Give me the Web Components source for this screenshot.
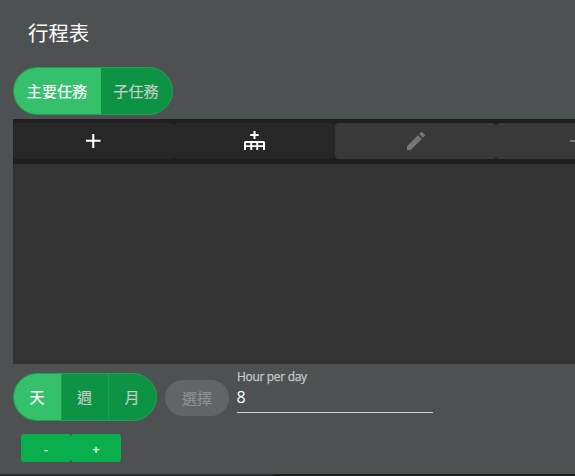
<!DOCTYPE html>
<html lang="zh-Hant">
<head>
<meta charset="utf-8">
<title>行程表</title>
<style>
html,body{margin:0;height:100%;overflow:hidden;background:#4d5151}
body{font-family:"Open Sans","Noto Sans CJK TC",sans-serif;color:#fff}
</style>
</head>
<body>
<schedule-page></schedule-page>
<script>
const define = (name, html) => customElements.define(name, class extends HTMLElement {
  constructor() {
    super();
    const t = document.createElement('template');
    t.innerHTML = html;
    this.attachShadow({mode: 'open'}).append(t.content.cloneNode(true));
  }
});

define('pill-group', `<style>
:host{display:flex;width:max-content;height:48px;box-sizing:border-box;border:1px solid #24a054;border-radius:24px;overflow:hidden;background:#0d9344}
</style><slot></slot>`);

define('pill-option', `<style>
:host{display:flex;box-sizing:border-box;align-items:center;justify-content:center;width:var(--w,48px);font-size:15px;line-height:20px;color:#c3cec6;font-weight:400;letter-spacing:.1px;border-left:1px solid #24a054}
:host(:first-child){border-left:0}
:host([plain]){border-left:0}
:host([selected]){background:#35c16c;color:#fff}
span{padding:0 1px 1px 0;-webkit-text-stroke:.2px currentColor}
</style><span><slot></slot></span>`);

define('tool-button', `<style>
:host{display:flex;flex:0 0 161px;height:36px;border-radius:4px;background:#272727;color:#fff;align-items:center;justify-content:center}
:host([disabled]){background:#393939;color:#767676}
</style><slot></slot>`);

define('tool-bar', `<style>
:host{display:flex;box-sizing:border-box;height:45px;padding-top:4px;background:#1f1f1f;overflow:hidden}
</style><slot></slot>`);

define('select-button', `<style>
:host{display:flex;box-sizing:border-box;width:64px;height:36px;padding-bottom:1px;border-radius:18px;background:#626566;color:#8d9090;align-items:center;justify-content:center;font-size:15px;font-weight:400;-webkit-text-stroke:.2px currentColor}
</style><slot></slot>`);

define('number-field', `<style>
:host{display:block;box-sizing:border-box;width:196px;height:44px;border-bottom:1px solid #d3d4d4}
label{display:block;width:max-content;font-size:12px;line-height:16px;color:#c8c9c9;letter-spacing:-.32px;-webkit-text-stroke:.25px currentColor}
output{display:block;font-size:16px;line-height:24px;text-indent:-.5px}
</style><label><slot name="label"></slot></label><output><slot></slot></output>`);

define('zoom-button', `<style>
:host{display:flex;box-sizing:border-box;width:50px;height:28px;padding-top:1px;border-radius:3px;background:#09af4c;align-items:center;justify-content:center;font-size:13px;font-weight:600}
</style><slot></slot>`);

define('schedule-page', `<style>
:host{display:flex;flex-direction:column;box-sizing:border-box;height:476px;overflow:hidden}
h1{margin:0;padding:18px 0 0 28px;height:49px;box-sizing:content-box;font-size:20.4px;line-height:30px;font-weight:400}
pill-group{margin-left:13px;flex:none}
tool-bar{margin:4px 0 0 13px;flex:none}
.canvas{height:200px;margin-left:13px;background:#333;flex:none}
.controls{display:flex;height:57px;margin-left:13px;padding-top:5px;box-sizing:border-box;flex:none}
.controls pill-group{margin:4px 0 0}
select-button{margin:11px 8px 0}
.zoom{display:flex;padding:13px 0 0 21px;height:40px;flex:none}
.footer{margin-top:auto;height:2px;background:linear-gradient(90deg,#292c2c 273px,#1c1d1d 273px);flex:none}
</style>
<h1>行程表</h1>
<pill-group>
  <pill-option selected style="--w:87px">主要任務</pill-option>
  <pill-option plain style="--w:71px">子任務</pill-option>
</pill-group>
<tool-bar>
  <tool-button><svg width="25" height="24" viewBox="0 0 25 24"><path fill="currentColor" d="M19.5 12.7h-6.2V19h-2.1v-6.3H5v-1.9h6.2V5h2.1v5.8h6.2z"/></svg></tool-button>
  <tool-button><svg width="23" height="24" viewBox="0 0 23 24"><path fill="currentColor" d="M10.5 2h2v3h3.2v2h-3.2v3h-2V7H7.2V5h3.3z"/><path fill="currentColor" fill-rule="evenodd" d="M2.5 12h18q1.500 0 1.500 1.500V21h-2v-3h-4.800v3h-1.900v-3H9.200v3H7.300v-3H3v3H1v-7.500Q1 12 2.500 12zM3 14v2.300h4.300V14zm6.200 0v2.300h4.100V14zm6 0v2.300H20V14z"/></svg></tool-button>
  <tool-button disabled><svg width="24" height="24" viewBox="0 0 24 24"><path fill="currentColor" d="M3 17.25V21h3.75L17.81 9.94l-3.75-3.75zM20.71 7.04a1 1 0 0 0 0-1.41l-2.34-2.34a1 1 0 0 0-1.41 0l-1.83 1.83 3.75 3.75z"/></svg></tool-button>
  <tool-button disabled><svg width="24" height="24" viewBox="0 0 24 24"><path fill="currentColor" d="M19 13H5v-2h14z"/></svg></tool-button>
</tool-bar>
<div class="canvas"></div>
<div class="controls">
  <pill-group>
    <pill-option selected style="--w:47px">天</pill-option>
    <pill-option style="--w:47px">週</pill-option>
    <pill-option style="--w:48px">月</pill-option>
  </pill-group>
  <select-button>選擇</select-button>
  <number-field><span slot="label">Hour per day</span>8</number-field>
</div>
<div class="zoom"><zoom-button>-</zoom-button><zoom-button>+</zoom-button></div>
<div class="footer"></div>`);
</script>
</body>
</html>
